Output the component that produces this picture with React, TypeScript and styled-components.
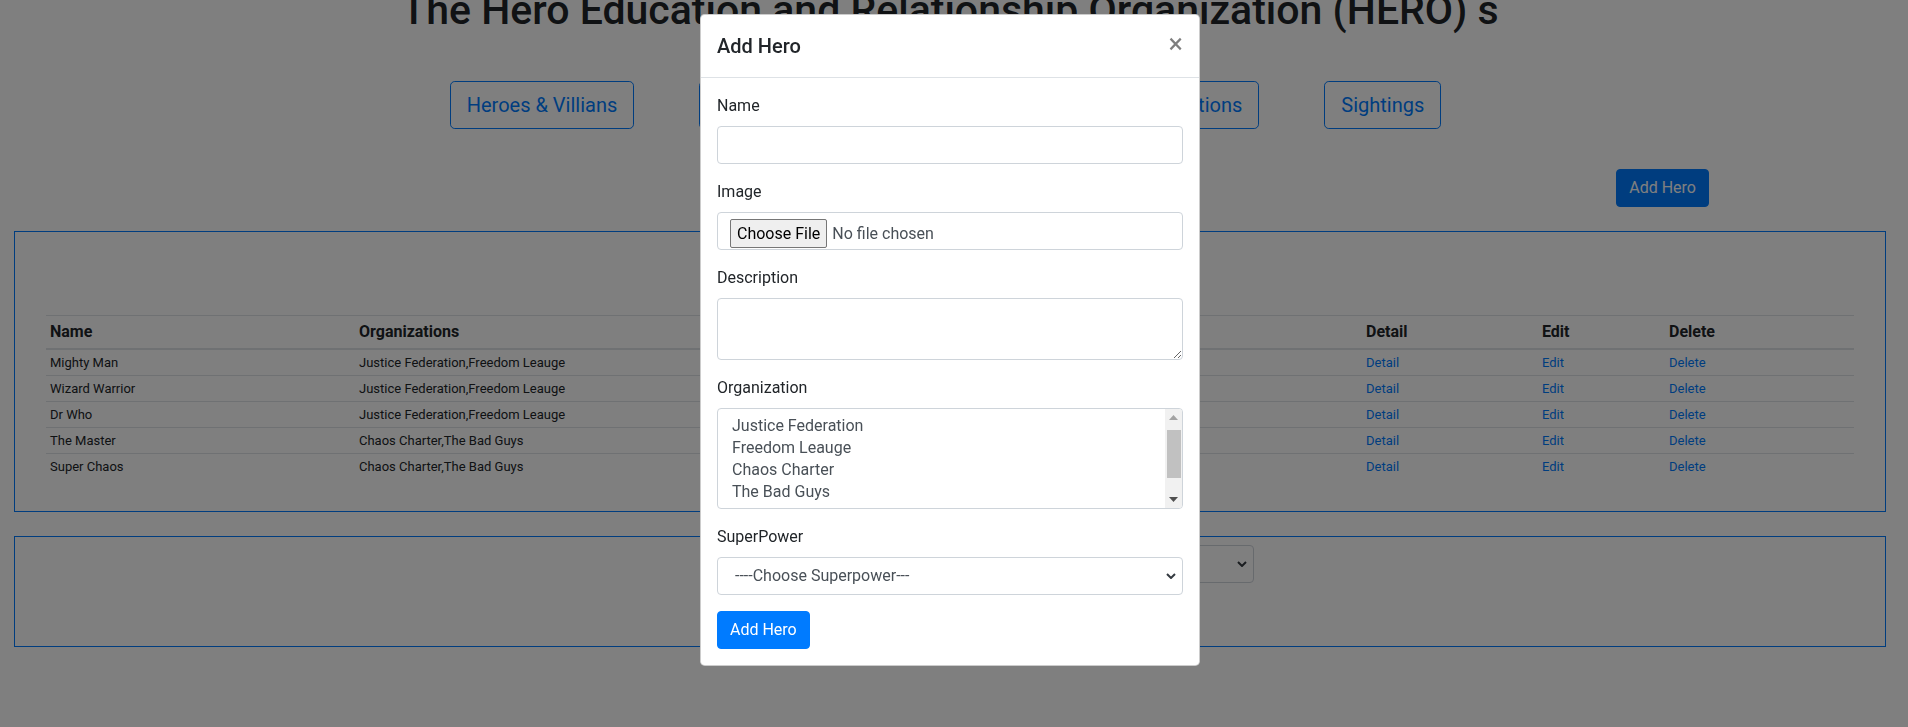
import React from "react";
import styled, { createGlobalStyle } from "styled-components";

const GlobalStyle = createGlobalStyle`
  * { box-sizing: border-box; }
  html, body {
    margin: 0;
    padding: 0;
    background: #fff;
  }
  body {
    font-family: Roboto, "Liberation Sans", Arial, sans-serif;
    font-size: 16px;
    line-height: 1.5;
    color: #212529;
    overflow: hidden;
  }
`;

const heroes = [
  { name: "Mighty Man", orgs: "Justice Federation,Freedom Leauge", power: "Super Strength" },
  { name: "Wizard Warrior", orgs: "Justice Federation,Freedom Leauge", power: "Magic" },
  { name: "Dr Who", orgs: "Justice Federation,Freedom Leauge", power: "Time Travel" },
  { name: "The Master", orgs: "Chaos Charter,The Bad Guys", power: "Mind Control" },
  { name: "Super Chaos", orgs: "Chaos Charter,The Bad Guys", power: "Chaos Energy" },
];

const navLinks = ["Heroes & Villians", "Superpowers", "Locations", "Organizations", "Sightings"];
const organizations = ["Justice Federation", "Freedom Leauge", "Chaos Charter", "The Bad Guys", "Villains United", "Hero League"];

// page behind the modal

const Page = styled.div`
  width: 1900px;
  height: 727px;
  overflow: hidden;
`;

const Title = styled.h1`
  margin: -14px 0 0;
  font-size: 41px;
  font-weight: 500;
  line-height: 1.2;
  text-align: center;
`;

const NavBar = styled.nav`
  display: flex;
  justify-content: center;
  gap: 65px;
  margin-top: 46px;
  padding-right: 9px;
`;

const OutlineButton = styled.button`
  font-family: inherit;
  font-size: 20px;
  line-height: 30px;
  padding: 8px 16px;
  border: 1px solid #007bff;
  border-radius: 4.8px;
  background: transparent;
  color: #007bff;
`;

const Toolbar = styled.div`
  display: flex;
  justify-content: flex-end;
  margin-top: 40px;
  padding-right: 191px;
`;

const PrimaryButton = styled.button`
  font-family: inherit;
  font-size: 16px;
  line-height: 24px;
  padding: 6px 12px;
  border: 1px solid #007bff;
  border-radius: 4px;
  background: #007bff;
  color: #fff;
`;

const Panel = styled.section`
  margin: 24px 14px 0;
  border: 1px solid #007bff;
  padding: 83px 31px 32px;
`;

const Table = styled.table`
  width: 100%;
  border-collapse: collapse;
  table-layout: fixed;
`;

const HeadCell = styled.th`
  padding: 4px;
  text-align: left;
  font-size: 16px;
  font-weight: 700;
  line-height: 24px;
  border-top: 1px solid #dee2e6;
  border-bottom: 2px solid #dee2e6;
`;

const Cell = styled.td`
  padding: 4px;
  font-size: 13px;
  line-height: 17px;
  border-top: 1px solid #dee2e6;
  white-space: nowrap;
`;

const TableLink = styled.a`
  color: #007bff;
  text-decoration: none;
`;

const FilterPanel = styled.section`
  margin: 24px 14px 0;
  border: 1px solid #007bff;
  display: flex;
  justify-content: flex-end;
  padding: 8px 631px 63px 0;
`;

const SelectWrap = styled.div<{ $width: string }>`
  position: relative;
  width: ${(p) => p.$width};
`;

const Select = styled.select`
  width: 100%;
  height: 38px;
  appearance: none;
  font-family: inherit;
  font-size: 16px;
  line-height: 24px;
  color: #495057;
  background: #fff;
  border: 1px solid #ced4da;
  border-radius: 4px;
  padding: 6px 28px 6px 17px;
`;

const Chevron = styled.svg`
  position: absolute;
  right: 7px;
  top: 16px;
  pointer-events: none;
`;

// modal

const Backdrop = styled.div`
  position: fixed;
  inset: 0;
  background: rgba(0, 0, 0, 0.5);
  display: flex;
  justify-content: center;
  align-items: flex-start;
  padding: 14px 8px 0 0;
`;

const Dialog = styled.div`
  width: 500px;
  background: #fff;
  border: 1px solid rgba(0, 0, 0, 0.2);
  border-radius: 4.8px;
`;

const DialogHeader = styled.div`
  display: flex;
  align-items: flex-start;
  padding: 16px;
  border-bottom: 1px solid #dee2e6;
`;

const DialogTitle = styled.h5`
  margin: 0;
  font-size: 20px;
  font-weight: 500;
  line-height: 30px;
`;

const CloseButton = styled.button`
  margin: -16px -16px -16px auto;
  padding: 17px 16px 15px;
  background: transparent;
  border: 0;
  font-family: inherit;
  font-size: 27px;
  font-weight: 400;
  line-height: 24px;
  color: #000;
  opacity: 0.5;
  text-shadow: 0 1px 0 #fff;
`;

const DialogBody = styled.div`
  padding: 16px;
`;

const FormGroup = styled.div`
  margin-bottom: 16px;
`;

const Label = styled.label`
  display: inline-block;
  margin-bottom: 8px;
  line-height: 24px;
`;

const TextInput = styled.input`
  display: block;
  width: 100%;
  height: 38px;
  padding: 6px 12px;
  font-family: inherit;
  font-size: 16px;
  color: #495057;
  border: 1px solid #ced4da;
  border-radius: 4px;
`;

const FileBox = styled.div`
  display: flex;
  align-items: flex-start;
  height: 38px;
  padding: 6px 12px;
  border: 1px solid #ced4da;
  border-radius: 4px;
  color: #495057;
`;

const FileButton = styled.button`
  height: 29px;
  padding: 0 6px;
  font-family: inherit;
  font-size: 16px;
  color: #000;
  background: #efefef;
  border: 1px solid #767676;
  border-radius: 2px;
  flex-shrink: 0;
`;

const FileName = styled.span`
  margin-left: 5px;
  line-height: 29px;
`;

const TextArea = styled.textarea`
  display: block;
  width: 100%;
  height: 62px;
  padding: 6px 12px;
  font-family: inherit;
  font-size: 16px;
  color: #495057;
  border: 1px solid #ced4da;
  border-radius: 4px;
  resize: vertical;
`;

const ListBox = styled.div`
  display: flex;
  height: 101px;
  border: 1px solid #ced4da;
  border-radius: 4px;
  overflow: hidden;
`;

const OptionList = styled.div`
  flex: 1;
  margin-bottom: 2px;
  padding: 6px 12px 0;
  overflow: hidden;
`;

const OptionItem = styled.div`
  padding: 0 2px 1px;
  font-size: 16px;
  line-height: 21px;
  color: #495057;
  white-space: nowrap;
`;

const ScrollTrack = styled.div`
  width: 17px;
  background: #f1f1f1;
  display: flex;
  flex-direction: column;
`;

const ScrollArrow = styled.div`
  height: 17px;
  display: flex;
  align-items: center;
  justify-content: center;
`;

const ScrollThumb = styled.div`
  height: 48px;
  margin: 4px 1px 0 2px;
  background: #c1c1c1;
`;

const ScrollSpacer = styled.div`
  flex: 1;
`;

const Triangle = ({ up, color }: { up?: boolean; color: string }) => (
  <svg width="9" height="5" viewBox="0 0 9 5">
    <path d={up ? "M0 5 L4.5 0 L9 5 Z" : "M0 0 L4.5 5 L9 0 Z"} fill={color} />
  </svg>
);

const ChevronIcon = () => (
  <Chevron width="10" height="6" viewBox="0 0 10 6">
    <path d="M1 1 L5 5 L9 1" fill="none" stroke="#343a40" strokeWidth="2" />
  </Chevron>
);

const App = () => {
  return (
    <>
      <GlobalStyle />
      <Page>
        <Title>The Hero Education and Relationship Organization (HERO) s</Title>

        <NavBar>
          {navLinks.map((link) => (
            <OutlineButton key={link}>{link}</OutlineButton>
          ))}
        </NavBar>

        <Toolbar>
          <PrimaryButton>Add Hero</PrimaryButton>
        </Toolbar>

        <Panel>
          <Table>
            <colgroup>
              <col style={{ width: 309 }} />
              <col style={{ width: 446 }} />
              <col style={{ width: 561 }} />
              <col style={{ width: 176 }} />
              <col style={{ width: 127 }} />
              <col style={{ width: 189 }} />
            </colgroup>
            <thead>
              <tr>
                <HeadCell>Name</HeadCell>
                <HeadCell>Organizations</HeadCell>
                <HeadCell>Superpower</HeadCell>
                <HeadCell>Detail</HeadCell>
                <HeadCell>Edit</HeadCell>
                <HeadCell>Delete</HeadCell>
              </tr>
            </thead>
            <tbody>
              {heroes.map((hero) => (
                <tr key={hero.name}>
                  <Cell>{hero.name}</Cell>
                  <Cell>{hero.orgs}</Cell>
                  <Cell>{hero.power}</Cell>
                  <Cell><TableLink href="#">Detail</TableLink></Cell>
                  <Cell><TableLink href="#">Edit</TableLink></Cell>
                  <Cell><TableLink href="#">Delete</TableLink></Cell>
                </tr>
              ))}
            </tbody>
          </Table>
        </Panel>

        <FilterPanel>
          <SelectWrap $width="450px">
            <Select defaultValue="">
              <option value="">----Choose Location---</option>
            </Select>
            <ChevronIcon />
          </SelectWrap>
        </FilterPanel>
      </Page>

      <Backdrop>
        <Dialog>
          <DialogHeader>
            <DialogTitle>Add Hero</DialogTitle>
            <CloseButton aria-label="Close">×</CloseButton>
          </DialogHeader>
          <DialogBody>
            <FormGroup>
              <Label>Name</Label>
              <TextInput type="text" />
            </FormGroup>
            <FormGroup>
              <Label>Image</Label>
              <FileBox>
                <FileButton>Choose File</FileButton>
                <FileName>No file chosen</FileName>
              </FileBox>
            </FormGroup>
            <FormGroup>
              <Label>Description</Label>
              <TextArea rows={2} />
            </FormGroup>
            <FormGroup>
              <Label>Organization</Label>
              <ListBox role="listbox">
                <OptionList>
                  {organizations.map((org) => (
                    <OptionItem key={org}>{org}</OptionItem>
                  ))}
                </OptionList>
                <ScrollTrack>
                  <ScrollArrow><Triangle up color="#a3a3a3" /></ScrollArrow>
                  <ScrollThumb />
                  <ScrollSpacer />
                  <ScrollArrow><Triangle color="#505050" /></ScrollArrow>
                </ScrollTrack>
              </ListBox>
            </FormGroup>
            <FormGroup>
              <Label>SuperPower</Label>
              <SelectWrap $width="100%">
                <Select defaultValue="">
                  <option value="">----Choose Superpower---</option>
                </Select>
                <ChevronIcon />
              </SelectWrap>
            </FormGroup>
            <PrimaryButton>Add Hero</PrimaryButton>
          </DialogBody>
        </Dialog>
      </Backdrop>
    </>
  );
};

export default App;
